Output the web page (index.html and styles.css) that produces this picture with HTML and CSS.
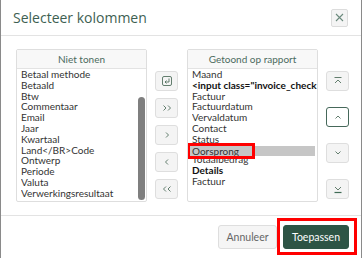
FILE: index.html
```html
<!DOCTYPE html>
<html lang="nl">
<head>
  <meta charset="UTF-8" />
  <meta name="viewport" content="width=device-width, initial-scale=1.0" />
  <title>Selecteer kolommen</title>
  <link rel="stylesheet" href="styles.css">
</head>
<body>

  <div class="modal">
    <header class="modal-header">
      <h2 class="modal-title">Selecteer kolommen</h2>
      <button class="close-btn" aria-label="Sluiten">
        <svg width="9" height="9" viewBox="0 0 9 9"><path d="M1 1 L8 8 M8 1 L1 8" /></svg>
      </button>
    </header>

    <div class="modal-body">
      <section class="col-panel">
        <div class="panel-head">Niet tonen</div>
        <ul class="col-list">
          <li>Betaal methode</li>
          <li>Betaald</li>
          <li>Btw</li>
          <li>Commentaar</li>
          <li>Email</li>
          <li>Jaar</li>
          <li>Kwartaal</li>
          <li>Land&lt;/BR&gt;Code</li>
          <li>Ontwerp</li>
          <li>Periode</li>
          <li>Valuta</li>
          <li>Verwerkingsresultaat</li>
        </ul>
        <span class="scroll-thumb"></span>
      </section>

      <div class="move-btns">
        <button class="icon-btn" title="Herstel">
          <svg width="12" height="12" viewBox="0 0 12 12"><rect x="1.5" y="1.5" width="9" height="9" rx="1.5" /><path d="M8 3.5 V7 H4 M5.5 5.5 L4 7 L5.5 8.5" /></svg>
        </button>
        <button class="icon-btn" title="Alles toevoegen">
          <svg width="12" height="12" viewBox="0 0 12 12"><path d="M2.5 3.5 L5 6 L2.5 8.5 M7 3.5 L9.5 6 L7 8.5" /></svg>
        </button>
        <button class="icon-btn" title="Toevoegen">
          <svg width="12" height="12" viewBox="0 0 12 12"><path d="M5 3.5 L7.5 6 L5 8.5" /></svg>
        </button>
        <button class="icon-btn" title="Verwijderen">
          <svg width="12" height="12" viewBox="0 0 12 12"><path d="M7 3.5 L4.5 6 L7 8.5" /></svg>
        </button>
        <button class="icon-btn" title="Alles verwijderen">
          <svg width="12" height="12" viewBox="0 0 12 12"><path d="M5 3.5 L2.5 6 L5 8.5 M9.5 3.5 L7 6 L9.5 8.5" /></svg>
        </button>
      </div>

      <section class="col-panel">
        <div class="panel-head">Getoond op rapport</div>
        <ul class="col-list">
          <li>Maand</li>
          <li class="bold">&lt;input class="invoice_check</li>
          <li>Factuur</li>
          <li>Factuurdatum</li>
          <li>Vervaldatum</li>
          <li>Contact</li>
          <li>Status</li>
          <li class="dragging">Oorsprong<span class="mark"></span></li>
          <li>Totaalbedrag</li>
          <li class="bold">Details</li>
          <li>Factuur</li>
        </ul>
      </section>

      <div class="order-btns">
        <button class="icon-btn" title="Naar boven">
          <svg width="12" height="12" viewBox="0 0 12 12"><path d="M2.5 2.5 H9.5 M3 8 L6 5 L9 8" /></svg>
        </button>
        <button class="icon-btn focus" title="Omhoog">
          <svg width="12" height="12" viewBox="0 0 12 12"><path d="M3.5 7.5 L6 5 L8.5 7.5" /></svg>
        </button>
        <button class="icon-btn" title="Omlaag">
          <svg width="12" height="12" viewBox="0 0 12 12"><path d="M3.5 4.5 L6 7 L8.5 4.5" /></svg>
        </button>
        <button class="icon-btn" title="Naar beneden">
          <svg width="12" height="12" viewBox="0 0 12 12"><path d="M3 4 L6 7 L9 4" /><path class="bar" d="M2.5 9.5 H9.5" /></svg>
        </button>
      </div>
    </div>

    <footer class="modal-footer">
      <button class="btn btn-light">Annuleer</button>
      <span class="mark-wrap"><button class="btn btn-primary">Toepassen</button></span>
    </footer>
  </div>

</body>
</html>
```

FILE: styles.css
```css
/* Reset */
* {
  box-sizing: border-box;
  margin: 0;
  padding: 0;
}

html, body {
  height: 100%;
}

body {
  font-family: Lato, "Open Sans", sans-serif;
  background: #8a8a8a;
  color: #333;
}

/* Modal */
.modal {
  height: 100%;
  margin: 0 1px;
  background: #fff;
  display: flex;
  flex-direction: column;
}

.modal-header {
  height: 36px;
  display: flex;
  align-items: center;
  justify-content: space-between;
  padding: 0 13px 0 12px;
  border-bottom: 1px solid #e3e3e3;
}

.modal-title {
  font-family: "Open Sans", Lato, sans-serif;
  font-size: 14px;
  font-weight: normal;
  color: #3e5f52;
}

.close-btn {
  width: 17px;
  height: 18px;
  display: flex;
  align-items: center;
  justify-content: center;
  background: #f4f4f4;
  border: 1px solid #dcdcdc;
  border-radius: 2px;
}

.close-btn svg path {
  stroke: #6b8a7d;
  stroke-width: 1.1;
  fill: none;
}

/* Body with the two lists */
.modal-body {
  display: flex;
  gap: 8px;
  padding: 13px 12px 13px 15px;
  border-bottom: 1px solid #e3e3e3;
}

.col-panel {
  position: relative;
  width: 132px;
  height: 153px;
  border: 1px solid #dedede;
  border-radius: 2px;
  display: flex;
  flex-direction: column;
}

.panel-head {
  height: 19px;
  line-height: 18px;
  text-align: center;
  font-size: 10px;
  color: #4b6b5e;
  background: #f8f8f8;
  border-bottom: 1px solid #e3e3e3;
}

.col-list {
  list-style: none;
  flex: 1;
  overflow: hidden;
  padding: 0 0 2px 4px;
  font-size: 10px;
  line-height: 10.8px;
}

.col-list li {
  white-space: nowrap;
  overflow: hidden;
}

.col-list .bold {
  font-weight: bold;
  color: #111;
}

.col-list .dragging {
  position: relative;
  z-index: 1;
  margin: 1px 2px -2px -4px;
  padding-left: 4px;
  background: #c6c6c6;
  overflow: visible;
}

/* Overlay scrollbar of the left list */
.scroll-thumb {
  position: absolute;
  right: 1px;
  bottom: 1px;
  width: 7px;
  height: 103px;
  border-radius: 4px;
  background: #7f7f7f;
}

/* Red annotation boxes */
.mark {
  position: absolute;
  left: -1px;
  top: -3px;
  width: 68px;
  height: 16px;
  border: 3px solid #f00;
}

.mark-wrap {
  position: relative;
  display: inline-flex;
}

.mark-wrap::after {
  content: "";
  position: absolute;
  left: -6px;
  top: -7px;
  right: -8px;
  bottom: -6px;
  border: 3px solid #f00;
}

/* Button columns */
.move-btns,
.order-btns {
  display: flex;
  flex-direction: column;
  padding-top: 22px;
}

.move-btns {
  gap: 7px;
  margin-right: 1px;
}

.order-btns {
  gap: 16px;
}

.icon-btn {
  width: 23px;
  height: 20px;
  display: flex;
  align-items: center;
  justify-content: center;
  background: #f4f4f4;
  border: 1px solid #dedede;
  border-radius: 3px;
}

.icon-btn.focus {
  border-color: #46685a;
  background: #fff;
}

.icon-btn svg path,
.icon-btn svg rect {
  stroke: #52705f;
  stroke-width: 0.9;
  fill: none;
}

.icon-btn svg .bar {
  stroke: #3f6b55;
  stroke-width: 1.2;
}

/* Footer */
.modal-footer {
  flex: 1;
  display: flex;
  justify-content: flex-end;
  align-items: flex-start;
  gap: 6px;
  padding: 9px 12px 0 0;
}

.btn {
  height: 24px;
  font-family: Lato, "Open Sans", sans-serif;
  font-size: 10.5px;
  border-radius: 3px;
  cursor: pointer;
}

.btn-light {
  width: 59px;
  background: #f5f5f5;
  border: 1px solid #dedede;
  color: #666;
}

.btn-primary {
  width: 66px;
  background: #2d5445;
  border: 1px solid #2d5445;
  color: #fff;
}
```
